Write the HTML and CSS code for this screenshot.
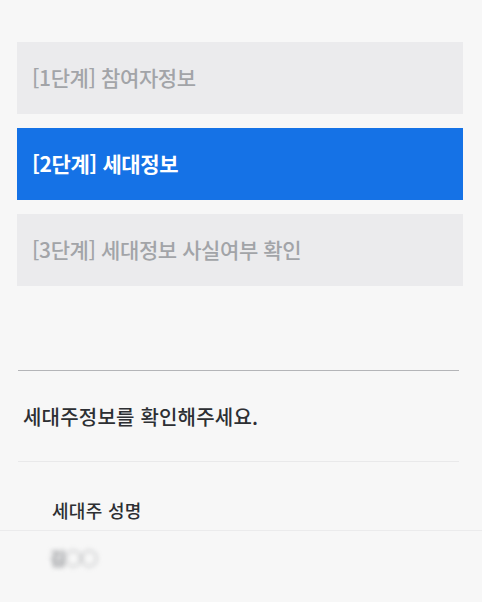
FILE: index.html
```html
<!DOCTYPE html>
<html lang="ko">
<head>
<meta charset="utf-8">
<link rel="stylesheet" href="styles.css">
</head>
<body>
<div class="page">
  <ul class="steps">
    <li class="step">[1단계] 참여자정보</li>
    <li class="step active">[2단계] 세대정보</li>
    <li class="step">[3단계] 세대정보 사실여부 확인</li>
  </ul>
  <section class="info">
    <h2 class="info-title">세대주정보를 확인해주세요.</h2>
    <div class="field">
      <div class="field-label">세대주 성명</div>
      <div class="field-value"><span class="masked">김○○</span></div>
    </div>
  </section>
</div>
</body>
</html>
```
FILE: styles.css
```css
html, body {
  margin: 0;
  padding: 0;
}
body {
  background: #f7f7f7;
  font-family: "Noto Sans CJK KR", "Noto Sans", sans-serif;
  width: 482px;
  height: 602px;
  overflow: hidden;
}
.page {
  padding-top: 42px;
}
.steps {
  list-style: none;
  margin: 0 19px 0 17px;
  padding: 0;
  display: flex;
  flex-direction: column;
  gap: 14px;
}
.step {
  height: 72px;
  display: flex;
  align-items: center;
  padding-left: 15px;
  padding-bottom: 3px;
  box-sizing: border-box;
  background: #ebebed;
  color: #a2a4a8;
  font-size: 21px;
  font-weight: 500;
  letter-spacing: -0.4px;
}
.step.active {
  background: #1572e6;
  color: #ffffff;
  font-weight: 700;
}
.info {
  margin-top: 84px;
}
.info-title {
  margin: 0 23px 0 18px;
  border-top: 1px solid #b4b5b8;
  border-bottom: 1px solid #e9e9ea;
  height: 90px;
  display: flex;
  align-items: center;
  padding-left: 5px;
  font-size: 20px;
  font-weight: 500;
  color: #2d2f33;
  letter-spacing: 0.2px;
}
.field-label {
  height: 69px;
  box-sizing: border-box;
  padding: 37px 0 0 52px;
  border-bottom: 1px solid #ebebec;
  font-size: 18px;
  font-weight: 500;
  color: #2d2f33;
  line-height: 22px;
  letter-spacing: 0.3px;
}
.field-value {
  padding: 14px 0 0 50px;
}
.masked {
  display: inline-block;
  font-size: 17px;
  font-weight: 700;
  color: #8a8c90;
  filter: blur(2.5px);
  letter-spacing: -1px;
}
```
